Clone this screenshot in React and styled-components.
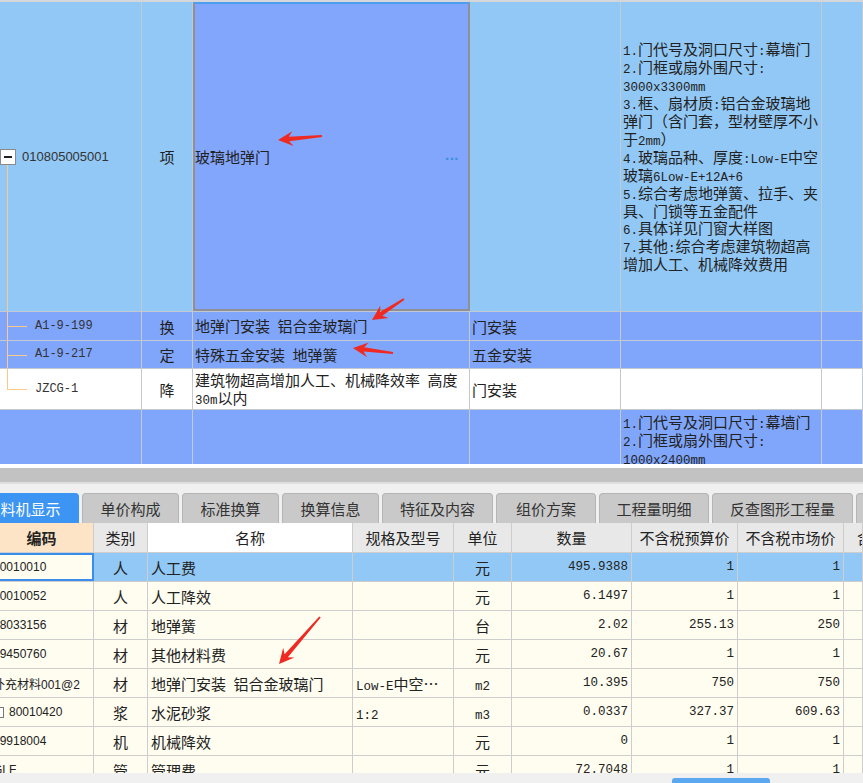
import React from "react";
import styled, { createGlobalStyle } from "styled-components";

const GlobalStyle = createGlobalStyle`
  html, body { margin: 0; padding: 0; background: #f0f0f0; }
  body {
    font-family: "Noto Sans CJK SC", "Liberation Sans", sans-serif;
    color: #222;
  }
`;

const CJK = `"Noto Sans CJK SC", "Liberation Sans", sans-serif`;
const MONO = `"Liberation Mono", "Noto Sans CJK SC", monospace`;

const TOP_COLS = "142px 51px 277px 151px 201px 1fr";
const BOT_COLS = "104px 54px 205px 101px 58px 120px 106px 106px 1fr";

const LIGHT = "#92c8f5";
const PERI = "#80a6fc";
const IVORY = "#fefdf0";
const LINE = "#c4c9d1";

const Page = styled.div`
  position: relative;
  width: 863px;
  height: 783px;
  overflow: hidden;
  display: flex;
  flex-direction: column;
  background: #f0f0f0;
`;

/* ---------- upper grid ---------- */

const TopGrid = styled.div`
  flex: none;
  border-top: 2px solid #d4d6da;
  display: flex;
  flex-direction: column;
`;

const TopRow = styled.div`
  display: grid;
  grid-template-columns: ${TOP_COLS};
  height: ${(p) => p.$h}px;
  box-sizing: border-box;
  background: ${(p) => p.$bg};
  border-bottom: ${(p) => (p.$last ? "none" : `1px solid ${LINE}`)};
`;

const Cell = styled.div`
  position: relative;
  box-sizing: border-box;
  border-right: 1px solid ${LINE};
  display: flex;
  align-items: ${(p) => (p.$top ? "flex-start" : "center")};
  justify-content: ${(p) => (p.$center ? "center" : "flex-start")};
  padding: ${(p) => p.$pad || "0 2px"};
  font-family: ${CJK};
  font-size: 15px;
  line-height: 17px;
  color: #222;
  white-space: nowrap;
  overflow: hidden;
`;

const SelCell = styled(Cell)`
  background: #82a6fb;
  border: 2px solid #8d9097;
  border-top-color: #4d9ef0;
  justify-content: space-between;
  padding: 0 9px 0 0;
`;

const Dots = styled.span`
  font-family: "Liberation Sans", sans-serif;
  font-size: 15px;
  font-weight: bold;
  color: #3d8fe0;
  letter-spacing: 0.5px;
  margin-top: -4px;
`;

const TreeCode = styled.span`
  font-family: "Liberation Sans", sans-serif;
  font-size: 13px;
  color: #333;
`;

const ChildCode = styled.span`
  font-family: ${MONO};
  font-size: 12px;
  color: #333;
`;

const Toggle = styled.span`
  box-sizing: border-box;
  width: 16px;
  height: 16px;
  border: 1px solid #8a8a8a;
  background: #fff;
  display: flex;
  align-items: center;
  justify-content: center;
  margin-right: 6px;
  &::after {
    content: "";
    width: 8px;
    height: 2px;
    background: #222;
  }
`;

const TreeV = styled.span`
  position: absolute;
  left: 7px;
  width: 1px;
  background: #fbc98a;
  top: ${(p) => p.$from};
  bottom: ${(p) => p.$to};
`;

const TreeH = styled.span`
  position: absolute;
  left: 7px;
  top: 50%;
  width: 20px;
  height: 1px;
  background: #fbc98a;
`;

const Desc = styled.div`
  font-family: ${CJK};
  font-size: 15px;
  line-height: 17.5px;
  color: #222;
`;

const Inline = styled.span`
  white-space: pre;
`;

const M = styled.span`
  font-family: ${MONO};
  font-size: 12.5px;
  line-height: 11px;
`;

const mix = (s) => (
  <Inline>
    {s.split(/([\x20-\x7e]+)/).map((t, i) => (i % 2 ? <M key={i}>{t}</M> : t))}
  </Inline>
);

/* ---------- splitter + tabs ---------- */

const Gap = styled.div`
  flex: none;
  height: 4px;
  background: #fff;
`;

const Splitter = styled.div`
  flex: none;
  height: 14px;
  background: #c2c2c2;
  border-bottom: 2px solid #dedede;
`;

const TabBar = styled.div`
  flex: none;
  display: flex;
  gap: 3px;
  align-items: flex-end;
  padding-top: 9px;
  margin-left: -33px;
`;

const Tab = styled.div`
  flex: none;
  box-sizing: border-box;
  width: ${(p) => p.$w}px;
  height: 30px;
  border: 1px solid ${(p) => (p.$active ? "#3d95f3" : "#b5b5b5")};
  border-bottom: none;
  border-radius: 4px 4px 0 0;
  background: ${(p) => (p.$active ? "#3d95f3" : "#c9c9c9")};
  color: ${(p) => (p.$active ? "#fff" : "#333")};
  font-family: ${CJK};
  font-size: 15px;
  display: flex;
  align-items: center;
  justify-content: center;
  white-space: nowrap;
  overflow: hidden;
`;

/* ---------- lower table ---------- */

const Table = styled.div`
  flex: none;
  height: 250px;
  overflow: hidden;
  margin-left: -10px;
  background: ${IVORY};
`;

const Row = styled.div`
  display: grid;
  grid-template-columns: ${BOT_COLS};
  height: ${(p) => p.$h}px;
  box-sizing: border-box;
  border-bottom: 1px solid #cdcdcd;
  background: ${(p) => p.$bg};
`;

const TCell = styled.div`
  box-sizing: border-box;
  border-right: 1px solid #cdcdcd;
  background: ${(p) => p.$bg || "transparent"};
  display: flex;
  align-items: center;
  justify-content: ${(p) =>
    p.$align === "center" ? "center" : p.$align === "right" ? "flex-end" : "flex-start"};
  padding: ${(p) => p.$pad || "0 3px"};
  font-family: ${CJK};
  font-size: 15px;
  font-weight: ${(p) => (p.$bold ? 700 : 400)};
  color: #222;
  white-space: nowrap;
  overflow: hidden;
`;

const FocusCell = styled(TCell)`
  background: ${IVORY};
  border: 2px solid #3a8de8;
  padding-left: 1px;
`;

const Code = styled.span`
  font-family: "Liberation Sans", "Noto Sans CJK SC", sans-serif;
  font-size: 12px;
  color: #222;
`;

const Num = styled.span`
  font-family: ${MONO};
  font-size: 12.5px;
  color: #222;
`;

const Check = styled.span`
  box-sizing: border-box;
  width: 11px;
  height: 11px;
  border: 1px solid #777;
  background: #fff;
  margin-right: 5px;
`;

const ScrollStrip = styled.div`
  flex: none;
  height: 10px;
  display: flex;
  align-items: flex-end;
  padding-left: 672px;
`;

const Thumb = styled.div`
  width: 98px;
  height: 5px;
  border-radius: 3px 3px 0 0;
  background: #5ba8f0;
`;

const Overlay = styled.svg`
  position: absolute;
  left: 0;
  top: 0;
  pointer-events: none;
`;

/* ---------- data ---------- */

const descMain = [
  "1.门代号及洞口尺寸:幕墙门",
  "2.门框或扇外围尺寸:",
  "3000x3300mm",
  "3.框、扇材质:铝合金玻璃地",
  "弹门（含门套，型材壁厚不小",
  "于2mm）",
  "4.玻璃品种、厚度:Low-E中空",
  "玻璃6Low-E+12A+6",
  "5.综合考虑地弹簧、拉手、夹",
  "具、门锁等五金配件",
  "6.具体详见门窗大样图",
  "7.其他:综合考虑建筑物超高",
  "增加人工、机械降效费用",
];

const descNext = ["1.门代号及洞口尺寸:幕墙门", "2.门框或扇外围尺寸:", "1000x2400mm"];

const children = [
  { code: "A1-9-199", type: "换", name: "地弹门安装 铝合金玻璃门", part: "门安装", h: 29, bg: PERI, tree: "mid" },
  { code: "A1-9-217", type: "定", name: "特殊五金安装 地弹簧", part: "五金安装", h: 28, bg: PERI, tree: "mid" },
  { code: "JZCG-1", type: "降", name: ["建筑物超高增加人工、机械降效率 高度", "30m以内"], part: "门安装", h: 41, bg: "#fff", tree: "end" },
];

const tabs = [
  { t: "工料机显示", w: 112, active: true },
  { t: "单价构成", w: 97 },
  { t: "标准换算", w: 97 },
  { t: "换算信息", w: 97 },
  { t: "特征及内容", w: 111 },
  { t: "组价方案", w: 100 },
  { t: "工程量明细", w: 110 },
  { t: "反查图形工程量", w: 141 },
  { t: "说明信息", w: 100 },
];

const items = [
  { code: "00010010", type: "人", name: "人工费", spec: "", unit: "元", qty: "495.9388", p1: "1", p2: "1", sel: true },
  { code: "00010052", type: "人", name: "人工降效", spec: "", unit: "元", qty: "6.1497", p1: "1", p2: "1" },
  { code: "18033156", type: "材", name: "地弹簧", spec: "", unit: "台", qty: "2.02", p1: "255.13", p2: "250" },
  { code: "09450760", type: "材", name: "其他材料费", spec: "", unit: "元", qty: "20.67", p1: "1", p2: "1" },
  { code: "补充材料001@2", type: "材", name: "地弹门安装 铝合金玻璃门", spec: "Low-E中空…", unit: "m2", qty: "10.395", p1: "750", p2: "750" },
  { code: "80010420", type: "浆", name: "水泥砂浆", spec: "1:2", unit: "m3", qty: "0.0337", p1: "327.37", p2: "609.63", box: true },
  { code: "99918004", type: "机", name: "机械降效", spec: "", unit: "元", qty: "0", p1: "1", p2: "1" },
  { code: "GLF", type: "管", name: "管理费", spec: "", unit: "元", qty: "72.7048", p1: "1", p2: "1" },
];

const arrows = [
  [278, 140, 322, 136],
  [372, 320, 404, 299],
  [353, 348, 393, 353],
  [279, 664, 320, 617],
];

function arrowPoints([tx, ty, sx, sy]) {
  const dx = tx - sx;
  const dy = ty - sy;
  const len = Math.hypot(dx, dy);
  const ux = dx / len;
  const uy = dy / len;
  const nx = -uy;
  const ny = ux;
  const p = (a, b) => [tx - ux * a + nx * b, ty - uy * a + ny * b];
  const pts = [
    p(0, 0),
    p(15, 7.5),
    p(11, 2.2),
    [sx + nx * 0.9, sy + ny * 0.9],
    [sx - nx * 0.9, sy - ny * 0.9],
    p(11, -2.2),
    p(15, -7.5),
  ];
  return pts.map((q) => q.map((v) => v.toFixed(1)).join(",")).join(" ");
}

/* ---------- component ---------- */

export default function App() {
  return (
    <>
      <GlobalStyle />
      <Page>
        <TopGrid>
          <TopRow $h={310} $bg={LIGHT}>
            <Cell $pad="0">
              <Toggle />
              <TreeCode>010805005001</TreeCode>
              <TreeV $from="calc(50% + 8px)" $to="0" />
            </Cell>
            <Cell $center>项</Cell>
            <SelCell>
              <span>玻璃地弹门</span>
              <Dots>...</Dots>
            </SelCell>
            <Cell />
            <Cell>
              <Desc>
                {descMain.map((l, i) => (
                  <div key={i}>{mix(l)}</div>
                ))}
              </Desc>
            </Cell>
            <Cell />
          </TopRow>

          {children.map((c) => (
            <TopRow key={c.code} $h={c.h} $bg={c.bg}>
              <Cell $pad="0 0 0 35px">
                <TreeV $from="0" $to={c.tree === "end" ? "50%" : "0"} />
                <TreeH />
                <ChildCode>{c.code}</ChildCode>
              </Cell>
              <Cell $center>{c.type}</Cell>
              <Cell>
                {Array.isArray(c.name) ? (
                  <Desc>
                    {c.name.map((l, i) => (
                      <div key={i}>{mix(l)}</div>
                    ))}
                  </Desc>
                ) : (
                  mix(c.name)
                )}
              </Cell>
              <Cell>{c.part}</Cell>
              <Cell />
              <Cell />
            </TopRow>
          ))}

          <TopRow $h={54} $bg={PERI} $last>
            <Cell />
            <Cell />
            <Cell />
            <Cell />
            <Cell $top $pad="3px 2px 0">
              <Desc>
                {descNext.map((l, i) => (
                  <div key={i}>{mix(l)}</div>
                ))}
              </Desc>
            </Cell>
            <Cell />
          </TopRow>
        </TopGrid>

        <Gap />
        <Splitter />

        <TabBar>
          {tabs.map((t) => (
            <Tab key={t.t} $w={t.w} $active={t.active}>
              {t.t}
            </Tab>
          ))}
        </TabBar>

        <Table>
          <Row $h={30} $bg="#e8e8e8">
            <TCell $align="center" $bg="#fde4c6" $bold>编码</TCell>
            <TCell $align="center">类别</TCell>
            <TCell $align="center" $bg="#fff">名称</TCell>
            <TCell $align="center">规格及型号</TCell>
            <TCell $align="center">单位</TCell>
            <TCell $align="center">数量</TCell>
            <TCell $align="center">不含税预算价</TCell>
            <TCell $align="center">不含税市场价</TCell>
            <TCell $pad="0 0 0 13px">含税市场价</TCell>
          </Row>

          {items.map((r) => {
            const CodeCell = r.sel ? FocusCell : TCell;
            return (
              <Row key={r.code} $h={29} $bg={r.sel ? LIGHT : IVORY}>
                <CodeCell>
                  {r.box && <Check />}
                  <Code>{r.code}</Code>
                </CodeCell>
                <TCell $align="center">{r.type}</TCell>
                <TCell>{mix(r.name)}</TCell>
                <TCell>{mix(r.spec)}</TCell>
                <TCell $align="center">{mix(r.unit)}</TCell>
                <TCell $align="right"><Num>{r.qty}</Num></TCell>
                <TCell $align="right"><Num>{r.p1}</Num></TCell>
                <TCell $align="right"><Num>{r.p2}</Num></TCell>
                <TCell />
              </Row>
            );
          })}
        </Table>

        <ScrollStrip>
          <Thumb />
        </ScrollStrip>

        <Overlay width="863" height="783" viewBox="0 0 863 783">
          {arrows.map((a, i) => (
            <polygon key={i} points={arrowPoints(a)} fill="#ee2a22" />
          ))}
        </Overlay>
      </Page>
    </>
  );
}
